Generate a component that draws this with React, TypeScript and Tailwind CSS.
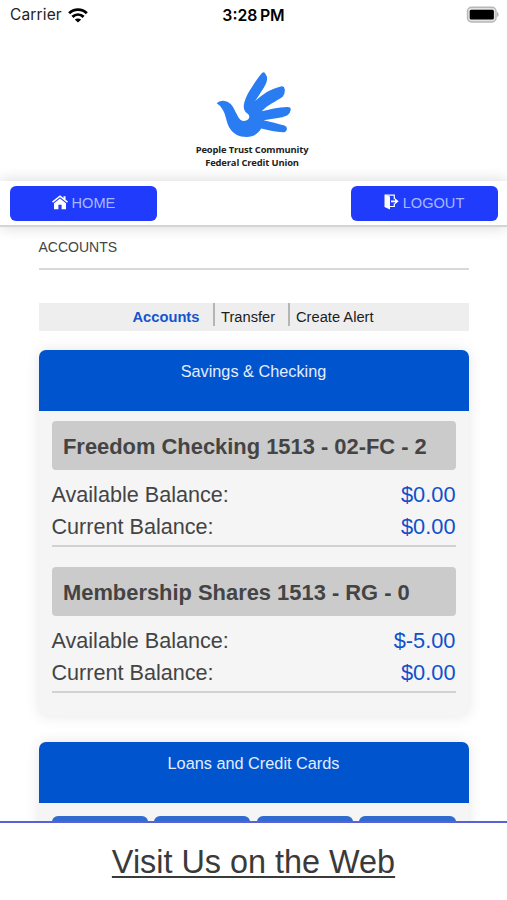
import React from 'react'

type Account = {
  name: string
  available: string
  current: string
}

const accounts: Account[] = [
  { name: 'Freedom Checking 1513 - 02-FC - 2', available: '$0.00', current: '$0.00' },
  { name: 'Membership Shares 1513 - RG - 0', available: '$-5.00', current: '$0.00' },
]

function StatusBar() {
  return (
    <div className="flex h-[30px] items-center justify-between pl-[10px] pr-[8px] font-['Inter',sans-serif] text-black">
      <div className="flex flex-1 items-center gap-[6px]">
        <span className="text-[15.5px] leading-[30px] tracking-[0.15px] text-[#222]">Carrier</span>
        <svg className="h-[15px] w-[20px]" viewBox="0 0 20 15" fill="none" stroke="#000" strokeWidth="2.9">
          <path d="M1.2 5.2C6 .4 14 .4 18.8 5.2" />
          <path d="M4.4 8.9c3.3-3 7.9-3 11.2 0" />
          <path d="M6.8 11.6c1.9-1.5 4.5-1.5 6.4 0L10 14.6z" fill="#000" stroke="none" />
        </svg>
      </div>
      <span className="-ml-[2px] text-[15.8px] font-semibold leading-[31px] [word-spacing:-1.5px]">3:28 PM</span>
      <div className="flex flex-1 justify-end">
        <svg className="-mt-[2px] h-[17px] w-[33px]" viewBox="0 0 33 17">
          <rect x="1.5" y="1.2" width="28.5" height="14.8" rx="4" fill="#e2e2e2" stroke="#b8b8b8" strokeWidth="1.4" />
          <rect x="3.7" y="3.7" width="24.2" height="9.8" rx="1.5" fill="#000" />
          <path d="M31.4 6.4q1.6 2 0 4.1z" fill="#a8a8a8" stroke="#b4b4b4" />
        </svg>
      </div>
    </div>
  )
}

function Logo() {
  return (
    <div className="flex h-[151px] flex-col items-center pt-[40px]">
      <svg className="h-[70px] w-[75px]" viewBox="0 0 75 70">
        <path
          fill="#2a7cf2"
          d="M.7 33.3Q3 30.5 7.3 30.7Q12 31.2 14.7 34C17.5 37 18.7 40.500 20.7 44C22.7 48 24 50.7 27.5 50.9Q30.5 51 32.3 49.2Q34.300 46.7 32.3 44.3Q29 42.5 28.2 39.5Q27.3 36.5 28.3 32.5C30 27 32 22.5 36 17C39.5 11.5 43 6 46.3 2.7Q48.3 1 49.8 4.5Q51.5 7 51 10C50.5 13.5 48.5 16.5 46 20.5C43.5 24.5 41.5 27.5 39 31.3C43 27.5 49 22.5 55 20C59 18 62.5 17.2 65.7 16.3Q68.3 16 68.7 19Q69.3 24 66.7 26.7C60 31.5 52 34.5 45.7 41.3C53 39.5 62 37.2 71.5 37Q75.300 37 74.6 40Q74.3 43.5 71.5 45.3C65 48.5 56 48.5 47.5 50.3C54.5 51.7 62 54 68.5 55.5Q71.5 56.5 70.8 59.5Q70 62.5 66.8 62.3C60 61.8 52.5 60.5 45.2 58.6C42 64 37 67 30.7 67C23 67 17 64 13.3 57.5C10 51.5 10 44.5 6.3 39Q4 35.300 .7 33.3Z"
        />
      </svg>
      <div className="mr-[3px] mt-[3px] whitespace-nowrap text-center font-['Open_Sans',sans-serif] text-[9.4px] font-bold leading-[13px] tracking-[-0.14px] text-[#222]">
        <p>People Trust Community</p>
        <p>Federal Credit Union</p>
      </div>
    </div>
  )
}

function HomeIcon() {
  return (
    <svg className="-mt-[2px] h-[15px] w-[16px]" viewBox="0 0 16 15">
      <path d="M.5 7.2 8 1.1l7.5 6.1" fill="none" stroke="#fff" strokeWidth="1.5" />
      <path d="M11.5 1.3h2v4l-2-1.7z" fill="#fff" />
      <path d="M8 3.4 2 8.3v5.9h4.4V9.8h3.2v4.4H14V8.3z" fill="#fff" />
    </svg>
  )
}

function LogoutIcon() {
  return (
    <svg className="-mt-[3px] h-[16px] w-[15px]" viewBox="0 0 15 16">
      <path d="M.5.6 6 2.6v12.9L.5 13z" fill="#fff" />
      <path d="M1 1.2h9.3v4M10.3 9.2v3.3H6" fill="none" stroke="#fff" strokeWidth="1.2" />
      <path d="M7 6.4h4V4.3l3.7 3-3.7 3V8.2H7z" fill="#fff" />
    </svg>
  )
}

function NavBar() {
  return (
    <nav className="relative flex h-[46px] items-start justify-between border-b-2 border-[#d4d4d4] bg-white pl-[10.4px] pr-[9.5px] pt-[5px] shadow-[0_0_14px_rgba(0,0,0,0.16)]">
      <button className="flex h-[35px] w-[147px] items-center justify-center gap-[4px] rounded-[6px] bg-[#213bfc] pr-[1px] text-[14.6px] text-[#a6b9ff]">
        <HomeIcon />
        HOME
      </button>
      <button className="flex h-[35px] w-[147px] items-center justify-center gap-[4px] rounded-[6px] bg-[#213bfc] text-[14.6px] text-[#a6b9ff]">
        <LogoutIcon />
        LOGOUT
      </button>
    </nav>
  )
}

function Tabs() {
  return (
    <div className="mt-[33px] flex h-[28px] bg-[#eee] pl-[94px] text-[14.7px] leading-[28px] text-[#1c1c1c]">
      <span className="w-[80px] font-bold text-[#1554cf]">Accounts</span>
      <span className="h-[23px] w-[75px] border-l-2 border-[#b5b5b5] pl-[6.5px]">Transfer</span>
      <span className="h-[23px] border-l-2 border-[#b5b5b5] pl-[6.5px]">Create Alert</span>
    </div>
  )
}

function BalanceRow({ label, value }: { label: string; value: string }) {
  return (
    <div className="flex h-[32.3px] items-baseline justify-between text-[21.6px] leading-[32px]">
      <span className="text-[#444]">{label}</span>
      <span className="text-[21.8px] text-[#1150cb]">{value}</span>
    </div>
  )
}

function Panel({ title, children }: { title: string; children: React.ReactNode }) {
  return (
    <section className="rounded-[7px] bg-[#f5f5f5] shadow-[0_0_14px_rgba(0,0,0,0.10)]">
      <h2 className="h-[61px] rounded-t-[7px] bg-[#0054cd] pt-[9px] text-center text-[16.3px] leading-[24px] text-[#e4edff]">
        {title}
      </h2>
      <div className="px-[13px]">{children}</div>
    </section>
  )
}

export default function App() {
  return (
    <div className="flex h-[900px] w-[507px] flex-col overflow-hidden bg-white font-['Liberation_Sans',Arial,sans-serif]">
      <StatusBar />
      <Logo />
      <NavBar />
      <main className="min-h-0 flex-1 overflow-hidden px-[38.5px]">
        <h1 className="h-[43px] border-b-2 border-[#d8d8d8] pt-[10px] text-[14px] leading-[20px] text-[#444]">ACCOUNTS</h1>
        <Tabs />
        <div className="mt-[19px] flex flex-col gap-[26px]">
          <Panel title="Savings & Checking">
            <div className="flex h-[305px] flex-col gap-[20px] pt-[10px]">
              {accounts.map((account) => (
                <div key={account.name} className="h-[126px] border-b-2 border-[#d2d2d2]">
                  <h3 className="mb-[9px] h-[49px] whitespace-nowrap rounded-[4px] bg-[#cbcbcb] pl-[11.5px] text-[21.9px] font-bold leading-[51px] text-[#444]">
                    {account.name}
                  </h3>
                  <BalanceRow label="Available Balance:" value={account.available} />
                  <BalanceRow label="Current Balance:" value={account.current} />
                </div>
              ))}
            </div>
          </Panel>
          <Panel title="Loans and Credit Cards">
            <div className="grid h-[100px] grid-cols-4 gap-[6.5px] pt-[13px]">
              {[0, 1, 2, 3].map((i) => (
                <div key={i} className="h-[40px] rounded-[6px] bg-[#316bd0]" />
              ))}
            </div>
          </Panel>
        </div>
      </main>
      <footer className="flex h-[79px] shrink-0 justify-center border-t-2 border-[#5a60d6] bg-white pt-[19px]">
        <a className="text-[32.4px] leading-[40px] text-[#3a3a3a] underline decoration-2 underline-offset-[3px]">Visit Us on the Web</a>
      </footer>
    </div>
  )
}
